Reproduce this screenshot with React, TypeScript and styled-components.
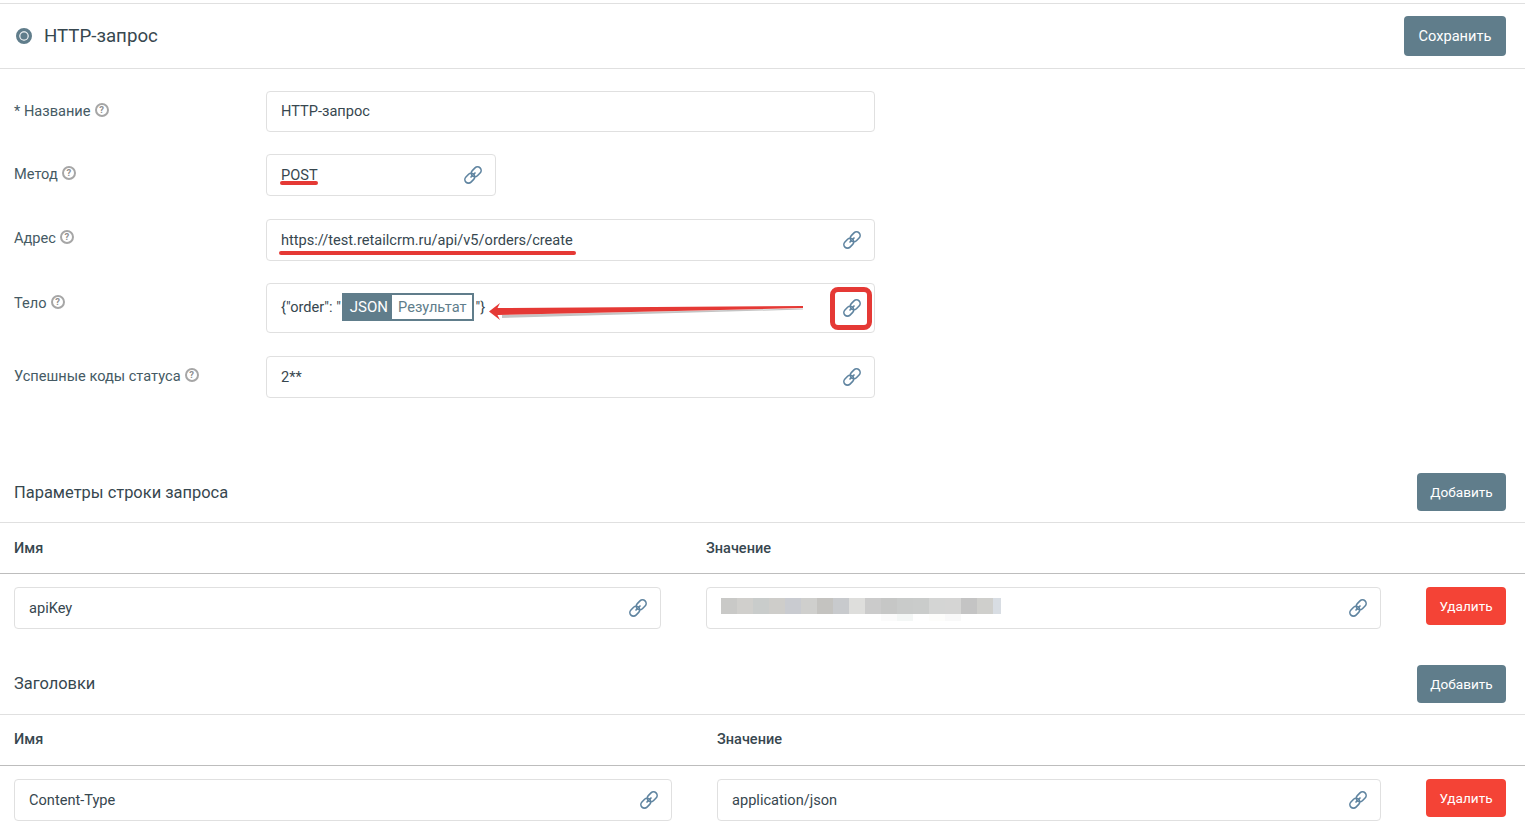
import React from "react";
import styled, { createGlobalStyle } from "styled-components";

const GlobalStyle = createGlobalStyle`
  html, body {
    margin: 0;
    padding: 0;
    background: #fff;
    font-family: Roboto, "Liberation Sans", sans-serif;
    font-size: 14.6px;
    color: #37474f;
  }
`;

const Page = styled.div`
  width: 1525px;
  height: 840px;
  overflow: hidden;
  border-top: 1px solid #e0e0e0;
  margin-top: 3px;
  box-sizing: border-box;
`;

const Header = styled.header`
  display: flex;
  align-items: center;
  justify-content: space-between;
  height: 64px;
  padding: 0 19px 0 16px;
  border-bottom: 1px solid #e0e0e0;
`;

const HeaderTitle = styled.div`
  display: flex;
  align-items: center;
  gap: 12px;
  font-size: 18.7px;
`;

const RadioMark = styled.span`
  width: 16px;
  height: 16px;
  box-sizing: border-box;
  border-radius: 50%;
  border: 3px solid #607d8b;
  background: #607d8b;
  box-shadow: inset 0 0 0 1.5px #dfe5e8;
`;

const Button = styled.button<{ $danger?: boolean; $w: number; $h: number; $fs?: number }>`
  width: ${(p) => p.$w}px;
  height: ${(p) => p.$h}px;
  border: 0;
  border-radius: 4px;
  padding: 0;
  flex: none;
  background: ${(p) => (p.$danger ? "#f44336" : "#607d8b")};
  color: #fff;
  font-family: inherit;
  font-size: ${(p) => p.$fs ?? 13.6}px;
  font-weight: 400;
`;

const Form = styled.div`
  display: flex;
  flex-direction: column;
  padding: 22px 0 0 14px;
`;

const FormRow = styled.div<{ $mb: number }>`
  display: flex;
  align-items: flex-start;
  margin-bottom: ${(p) => p.$mb}px;
`;

const Label = styled.div<{ $h?: number }>`
  width: 252px;
  flex: none;
  display: flex;
  align-items: center;
  gap: 4px;
  height: ${(p) => p.$h ?? 40}px;
  color: #455a64;
`;

const Help = styled.span`
  width: 14px;
  height: 14px;
  box-sizing: border-box;
  margin-bottom: 2px;
  border: 2px solid #a6a6a6;
  border-radius: 50%;
  color: #8f8f8f;
  font-size: 9.5px;
  font-weight: 700;
  line-height: 10px;
  text-align: center;
`;

const Field = styled.div<{ $w: number; $h?: number; $pb?: number }>`
  position: relative;
  display: flex;
  align-items: center;
  justify-content: space-between;
  box-sizing: border-box;
  width: ${(p) => p.$w}px;
  height: ${(p) => p.$h ?? 42}px;
  padding: 0 12px ${(p) => p.$pb ?? 0}px 14px;
  border: 1px solid #e0e0e0;
  border-radius: 4px;
  background: #fff;
  color: #37474f;
  flex: none;
`;

const Underline = styled.span<{ $left: number; $w: number; $top: number }>`
  position: absolute;
  left: ${(p) => p.$left}px;
  top: ${(p) => p.$top}px;
  width: ${(p) => p.$w}px;
  height: 4px;
  border-radius: 2px;
  background: #e53935;
`;

const BodyRow = styled.div`
  display: flex;
  align-items: center;
  justify-content: space-between;
  width: 100%;
`;

const BodyText = styled.span`
  display: flex;
  align-items: center;
  position: relative;
  top: -1px;
`;

const Quote = styled.span`
  color: #37474f;
`;

const Chip = styled.span`
  display: flex;
  align-items: stretch;
  height: 28px;
  margin: 0 2px 0 1px;
  border: 2px solid #607d8b;
  box-sizing: border-box;
`;

const ChipKey = styled.span`
  display: flex;
  align-items: center;
  padding: 0 4px 0 6px;
  background: #607d8b;
  color: #fff;
  font-size: 15px;
`;

const ChipValue = styled.span`
  display: flex;
  align-items: center;
  padding: 0 5px 0 6px;
  color: #607d8b;
`;

const Arrow = styled.svg`
  position: absolute;
  left: 221px;
  top: 16px;
`;

const RedBox = styled.span`
  position: absolute;
  left: 563px;
  top: 3px;
  width: 42px;
  height: 43px;
  box-sizing: border-box;
  border: 5px solid #e53935;
  border-radius: 8px;
`;

const Section = styled.section<{ $mt: number }>`
  margin-top: ${(p) => p.$mt}px;
`;

const SectionHead = styled.div`
  display: flex;
  align-items: center;
  justify-content: space-between;
  height: 38px;
  padding: 0 19px 11px 14px;
  border-bottom: 1px solid #e0e0e0;
  font-size: 16.45px;
`;

const SectionTitle = styled.span<{ $mb?: number }>`
  margin-bottom: ${(p) => p.$mb ?? 0}px;
`;

const ColumnsHead = styled.div<{ $pb?: number }>`
  display: flex;
  align-items: center;
  box-sizing: border-box;
  height: 51px;
  padding: 0 0 ${(p) => p.$pb ?? 0}px 14px;
  border-bottom: 1px solid #bdbdbd;
  font-size: 14.5px;
  font-weight: 500;
  color: #37474f;
`;

const ColName = styled.div<{ $w: number }>`
  width: ${(p) => p.$w}px;
`;

const ParamRow = styled.div`
  display: flex;
  align-items: flex-start;
  padding: 13px 19px 0 14px;
`;

const Spacer = styled.div<{ $w: number }>`
  width: ${(p) => p.$w}px;
  flex: none;
`;

const Blur = styled.div`
  position: absolute;
  left: 14px;
  top: 10px;
  display: flex;
`;

const BlurCell = styled.span<{ $c: string; $half?: boolean }>`
  width: ${(p) => (p.$half ? 8 : 16)}px;
  height: 16px;
  background: ${(p) => p.$c};
  position: relative;
`;

const BlurTail = styled.span<{ $c: string }>`
  position: absolute;
  left: 0;
  top: 16px;
  width: 16px;
  height: 7px;
  background: ${(p) => p.$c};
`;

const LinkIcon = () => (
  <svg width="20" height="20" viewBox="0 0 20 20" fill="none" stroke="#5f84a0" strokeWidth="1.6">
    <g transform="rotate(-45 10 10)">
      <rect x="0" y="6.4" width="11" height="7.2" rx="3.6" />
      <rect x="9" y="6.4" width="11" height="7.2" rx="3.6" />
      <path d="M6.5 10h7" />
    </g>
  </svg>
);

const blurColors: [string, string?][] = [
  ["#c9c9c7"],
  ["#d0cfcc"],
  ["#c9cccb"],
  ["#cecdca"],
  ["#c9cbd0"],
  ["#cfcfcd"],
  ["#c4c3c0"],
  ["#c8cacd"],
  ["#dededc"],
  ["#cbcbcb"],
  ["#c6c7c6", "#fbfbfb"],
  ["#c9cbca", "#f4f7f6"],
  ["#cacccb"],
  ["#d4d5d4", "#fdfdfb"],
  ["#d5d5d4", "#f9f9f9"],
  ["#c4c4c4"],
  ["#cfcfcc"],
];

const App = () => {
  return (
    <>
      <GlobalStyle />
      <Page>
        <Header>
          <HeaderTitle>
            <RadioMark />
            HTTP-запрос
          </HeaderTitle>
          <Button $w={102} $h={40} $fs={14.6}>Сохранить</Button>
        </Header>

        <Form>
          <FormRow $mb={22}>
            <Label>* Название <Help>?</Help></Label>
            <Field $w={609} $h={41} $pb={2}>HTTP-запрос</Field>
          </FormRow>
          <FormRow $mb={23}>
            <Label>Метод <Help>?</Help></Label>
            <Field $w={230}>
              POST
              <LinkIcon />
              <Underline $left={13} $w={38} $top={26} />
            </Field>
          </FormRow>
          <FormRow $mb={22}>
            <Label $h={38}>Адрес <Help>?</Help></Label>
            <Field $w={609}>
              https://test.retailcrm.ru/api/v5/orders/create
              <LinkIcon />
              <Underline $left={12} $w={297} $top={31} />
            </Field>
          </FormRow>
          <FormRow $mb={23}>
            <Label>Тело <Help>?</Help></Label>
            <Field $w={609} $h={50}>
              <BodyRow>
                <BodyText>
                  {'{"order": "'}
                  <Chip>
                    <ChipKey>JSON</ChipKey>
                    <ChipValue>Результат</ChipValue>
                  </Chip>
                  <Quote>{'"}'}</Quote>
                </BodyText>
                <LinkIcon />
              </BodyRow>
              <Arrow width="320" height="22" viewBox="0 0 320 22">
                <polygon points="14,15 315,8.5 315,9.5 14,18" fill="#c4c4c4" />
                <polygon points="1,11.5 12,3 9.5,8 315,6 315,8 9.5,15 12,20" fill="#e53935" />
              </Arrow>
              <RedBox />
            </Field>
          </FormRow>
          <FormRow $mb={0}>
            <Label>Успешные коды статуса <Help>?</Help></Label>
            <Field $w={609}>
              2**
              <LinkIcon />
            </Field>
          </FormRow>
        </Form>

        <Section $mt={75}>
          <SectionHead>
            <SectionTitle>Параметры строки запроса</SectionTitle>
            <Button $w={89} $h={38}>Добавить</Button>
          </SectionHead>
          <ColumnsHead>
            <ColName $w={692}>Имя</ColName>
            <ColName $w={300}>Значение</ColName>
          </ColumnsHead>
          <ParamRow>
            <Field $w={647}>
              apiKey
              <LinkIcon />
            </Field>
            <Spacer $w={45} />
            <Field $w={675}>
              <Blur>
                {blurColors.map(([c, tail], i) => (
                  <BlurCell key={i} $c={c}>
                    {tail && <BlurTail $c={tail} />}
                  </BlurCell>
                ))}
                <BlurCell $c="#d8dde3" $half />
              </Blur>
              <span />
              <LinkIcon />
            </Field>
            <Spacer $w={45} />
            <Button $danger $w={80} $h={38}>Удалить</Button>
          </ParamRow>
        </Section>

        <Section $mt={36}>
          <SectionHead>
            <SectionTitle $mb={2}>Заголовки</SectionTitle>
            <Button $w={89} $h={38}>Добавить</Button>
          </SectionHead>
          <ColumnsHead $pb={2}>
            <ColName $w={703}>Имя</ColName>
            <ColName $w={300}>Значение</ColName>
          </ColumnsHead>
          <ParamRow>
            <Field $w={658}>
              Content-Type
              <LinkIcon />
            </Field>
            <Spacer $w={45} />
            <Field $w={664}>
              application/json
              <LinkIcon />
            </Field>
            <Spacer $w={45} />
            <Button $danger $w={80} $h={38}>Удалить</Button>
          </ParamRow>
        </Section>
      </Page>
    </>
  );
};

export default App;
